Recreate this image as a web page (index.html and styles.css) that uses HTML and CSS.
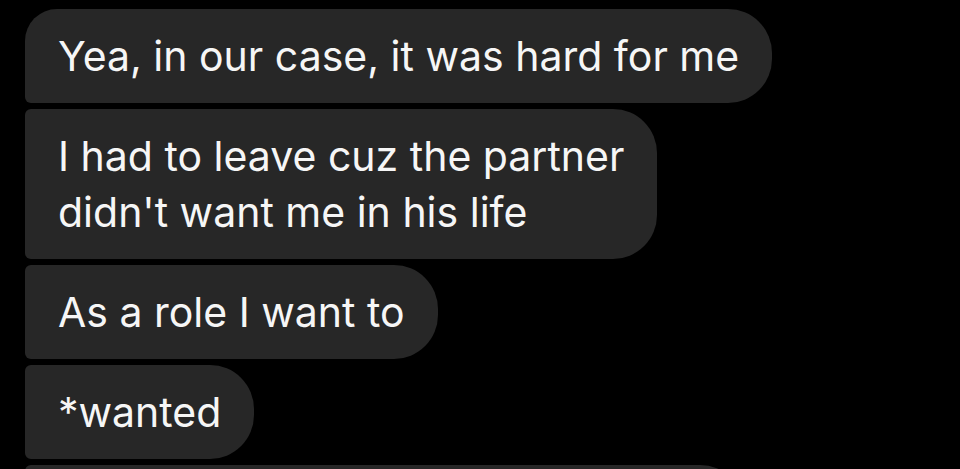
FILE: index.html
```html
<!DOCTYPE html>
<html lang="en">

<head>
    <meta charset="UTF-8">
    <meta name="viewport" content="width=device-width, initial-scale=1.0">
    <title>chat</title>
    <link rel="stylesheet" href="styles.css">
</head>

<body>
    <div class="thread">
        <div class="bubble first">Yea, in our case, it was hard for me</div>
        <div class="bubble">I had to leave cuz the partner<br>didn't want me in his life</div>
        <div class="bubble">As a role I want to</div>
        <div class="bubble">*wanted</div>
        <div class="bubble">But now I can see her every week</div>
    </div>
</body>

</html>
```

FILE: styles.css
```css
* {
    margin: 0;
    padding: 0;
    box-sizing: border-box;
}

body {
    background-color: black;
    font-family: Inter, 'Noto Sans', sans-serif;
    overflow: hidden;
}

.thread {
    display: flex;
    flex-direction: column;
    align-items: flex-start;
    gap: 6px;
    padding: 9px 0 0 25px;
}

.bubble {
    background-color: #272727;
    color: #f6f6f6;
    font-size: 41px;
    line-height: 56px;
    padding: 19px 33px;
    border-radius: 6px 44px 44px 6px;
}

.bubble.first {
    border-top-left-radius: 32px;
}
```
